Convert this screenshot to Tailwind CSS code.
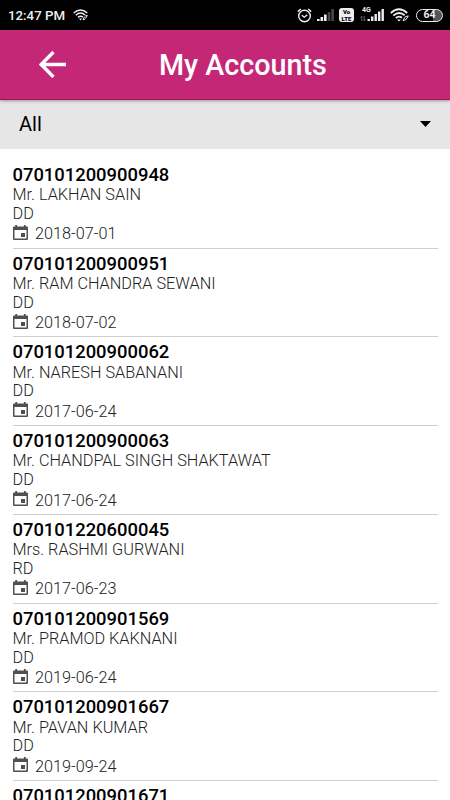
<!DOCTYPE html>
<html lang="en">
<head>
<meta charset="utf-8">
<title>My Accounts</title>
<script src="https://cdn.jsdelivr.net/npm/@tailwindcss/browser@4"></script>
</head>
<body class="bg-white font-[Roboto,sans-serif] overflow-hidden">
<div class="w-[450px] h-[800px] flex flex-col overflow-hidden">
  <div class="h-[30px] shrink-0 bg-black text-[#eee] flex items-center pl-2 pr-[7px]">
    <span class="text-[13.3px] font-medium leading-none w-[65px] pt-px whitespace-nowrap">12:47 PM</span>
    <svg class="w-4 h-3" viewBox="0 0 16 12" fill="none" stroke="#eee" stroke-width="1.5"><path d="M.7 4Q7.5-2 14.3 4M2.8 6.2Q7.5 2 12 6M5 8.4Q7.5 6.3 10 8.2"/><path d="M6 9.6h3L7.5 11.4z" fill="#eee" stroke="none"/><path d="M10 10.5l1.8-3M12.5 9.5l1.8-3M10 10.5l2.2-.3M14.3 6.5l-2.2.3" stroke-width="1"/></svg>
    <div class="ml-auto flex items-center">
      <svg class="w-[15px] h-[15px]" viewBox="0 0 15 15" fill="none" stroke="#eee" stroke-width="1.4"><circle cx="7.5" cy="8" r="5.8"/><path d="M.8 3.6L3.8 1M14.2 3.6L11.2 1M4.8 7.2l2.5 2 3-2.4"/></svg>
      <svg class="ml-[5px] w-[17px] h-3" viewBox="0 0 17 12" fill="#eee"><path d="M0 10h2.6v2H0zM3.5 8h2.6v4H3.5zM7 5.5h2.6V12H7z"/><path d="M10.7 3h2.6v9h-2.6zM14.3 0h2.6v12h-2.6z" fill="#484848"/></svg>
      <div class="ml-[5px] w-[15px] h-[14px] rounded-[3px] bg-[#eee] text-black text-[6px] leading-[7px] font-black flex flex-col items-center justify-center"><span>Vo</span><span>LTE</span></div>
      <div class="relative ml-[6px] w-[24px] h-[14px]">
        <span class="absolute left-[2px] top-[-2px] text-[7px] leading-[8px] font-bold">4G</span>
        <svg class="w-6 h-[14px]" viewBox="0 0 24 14" fill="#eee"><path d="M7.5 11h2.4v2H7.5zM11 8.5h2.4V13H11zM14.5 6h2.4v7h-2.4zM18 3.5h2.4V13H18zM21.5 1h2.4v12h-2.4z"/><path d="M1.8 8v5M.5 9.5L1.8 8M4.2 8v5l1.3-1.5" fill="none" stroke="#666"/></svg>
      </div>
      <svg class="ml-[6px] w-[20px] h-[14px]" viewBox="0 0 20 14" fill="none" stroke="#eee" stroke-width="1.8"><path d="M.8 5Q9-2.5 17.2 5M3.3 7.6Q9 2.5 14.7 7.3M5.8 10Q9 7.5 12 9.8"/><path d="M7 11.4h4L9 13.6z" fill="#eee" stroke="none"/><path d="M13 12.5l2.3-3.8M16 11.7l2.3-3.8M13 12.5l3-.8M18.3 7.9l-3 .8" stroke-width="1"/></svg>
      <div class="ml-[6px] w-[27px] h-[13px] rounded-full border-[1.5px] border-[#eee] bg-gradient-to-r from-black from-65% to-[#555] to-65% flex items-center justify-center pt-px text-[10.5px] leading-none font-bold">64</div>
    </div>
  </div>
  <header class="relative z-10 h-[70px] shrink-0 bg-[#c52777] border-b border-[#9b175a] shadow-[0_1px_3px_rgba(0,0,0,0.35)] flex items-center pl-[39px] text-white">
    <svg class="w-[27px] h-[27px]" viewBox="0 0 27 27" fill="none" stroke="#fff" stroke-width="3.4"><path d="M27 13.5H2.5M14.5 1L2.2 13.5 14.5 26"/></svg>
    <h1 class="ml-[93px] pt-px text-[28.7px] leading-none font-medium whitespace-nowrap">My Accounts</h1>
  </header>
  <div class="h-[49px] shrink-0 bg-[#e6e6e6] flex items-center justify-between pl-[19px] pr-[19px] pb-px text-black">
    <span class="text-[20px] leading-none">All</span>
    <svg class="w-[11px] h-[6px]" viewBox="0 0 11 6"><path d="M0 0h11L5.5 6z"/></svg>
  </div>
  <main id="accounts" class="flex-1 min-h-0 overflow-hidden pt-[10.75px] px-[12.5px]"></main>
</div>
<template id="row">
  <article class="h-[88.75px] pt-[4px] border-b border-[#cfcfcf] text-[16.25px] leading-[18.75px] font-light text-[#222]">
    <h2 class="text-[18.4px] leading-[21.5px] mb-[0.75px] font-medium text-black"></h2>
    <p></p>
    <p></p>
    <div class="flex items-center h-[22.5px]">
      <svg class="w-[15px] h-[15px] mb-[5px]" viewBox="0 0 15 15"><path fill="#505050" fill-rule="evenodd" d="M2.3 0h1.8v1.5h6.8V0h1.8v1.5H14q1 0 1 1V14q0 1-1 1H1q-1 0-1-1V2.5q0-1 1-1h1.3zM1.5 5v8.5h12V5z"/><path fill="#505050" d="M8 8h4v4H8z"/></svg>
      <time class="ml-[7.5px]"></time>
    </div>
  </article>
</template>
<script>
const accounts = [
  ["070101200900948", "Mr. LAKHAN SAIN", "DD", "2018-07-01"],
  ["070101200900951", "Mr. RAM CHANDRA SEWANI", "DD", "2018-07-02"],
  ["070101200900062", "Mr. NARESH SABANANI", "DD", "2017-06-24"],
  ["070101200900063", "Mr. CHANDPAL SINGH SHAKTAWAT", "DD", "2017-06-24"],
  ["070101220600045", "Mrs. RASHMI GURWANI", "RD", "2017-06-23"],
  ["070101200901569", "Mr. PRAMOD KAKNANI", "DD", "2019-06-24"],
  ["070101200901667", "Mr. PAVAN KUMAR", "DD", "2019-09-24"],
  ["070101200901671", "", "", ""]
];
const list = document.getElementById("accounts");
for (const account of accounts) {
  const row = document.getElementById("row").content.cloneNode(true);
  row.querySelectorAll("h2, p, time").forEach((el, i) => { el.textContent = account[i]; });
  list.append(row);
}
</script>
</body>
</html>
